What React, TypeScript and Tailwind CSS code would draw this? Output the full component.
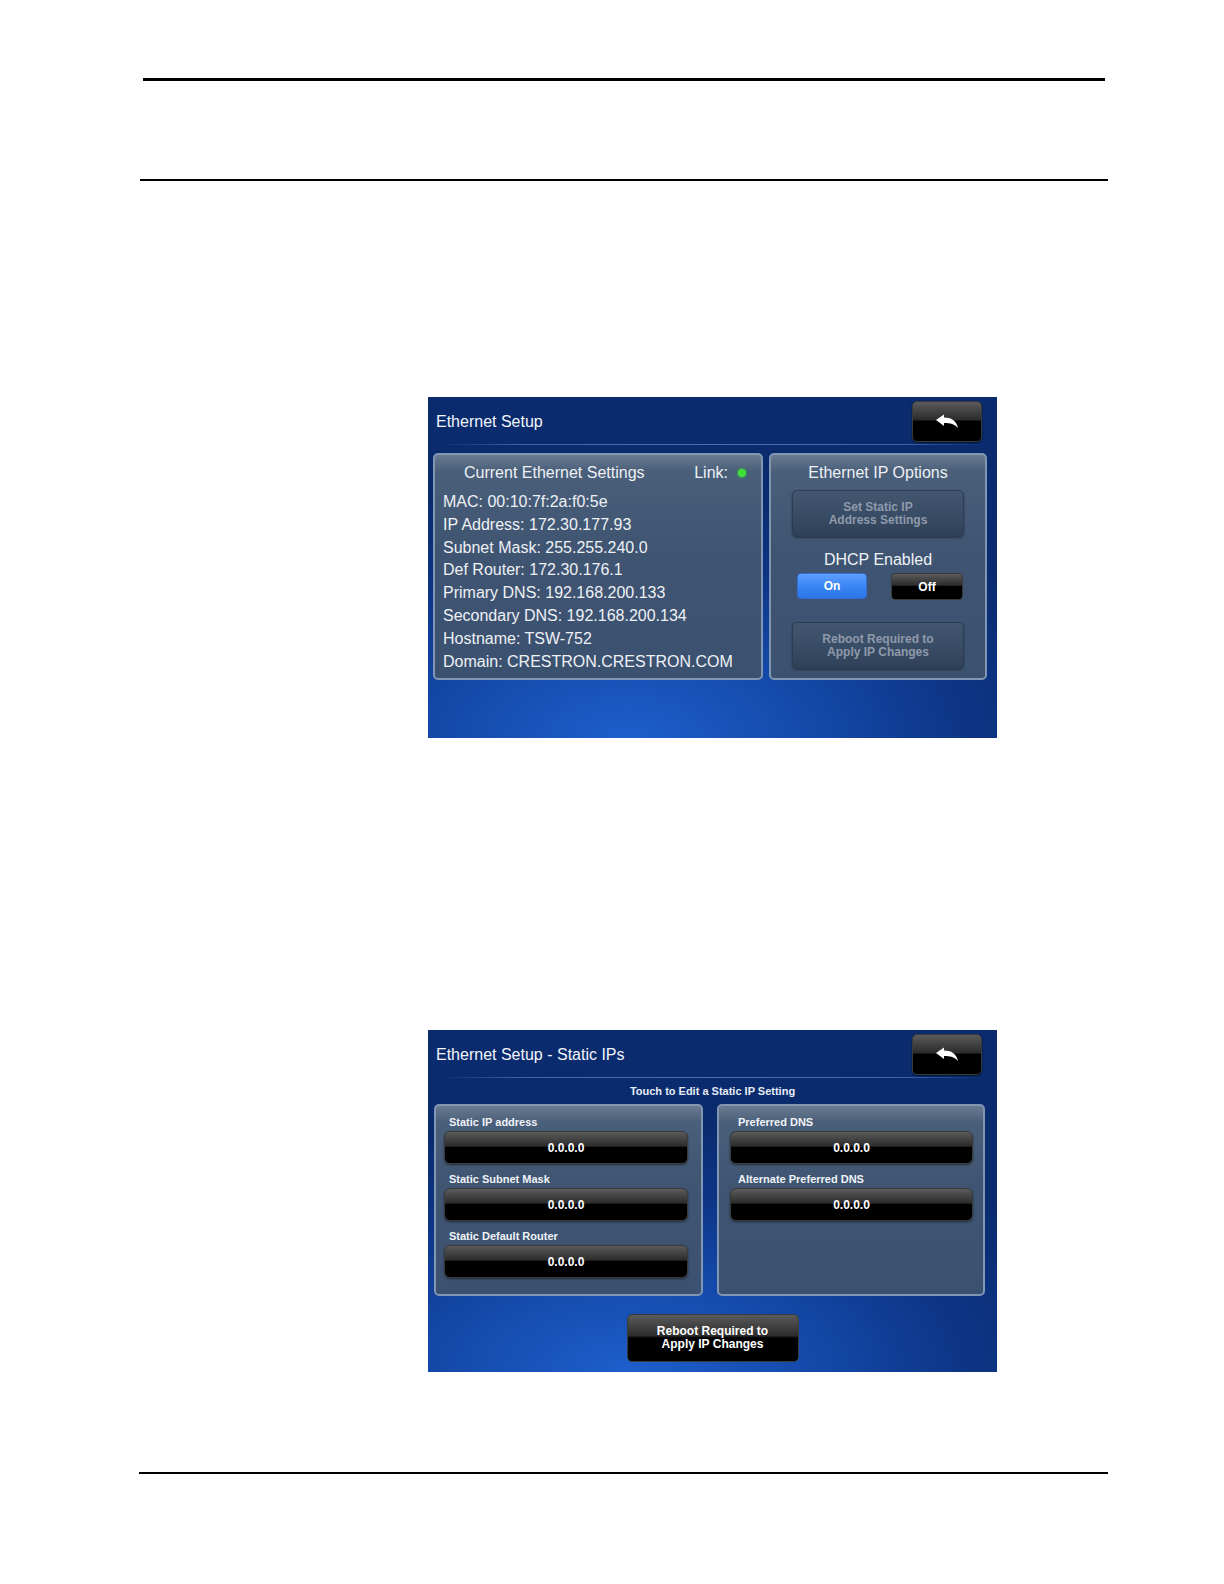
const screenBg =
  'bg-[radial-gradient(ellipse_85%_75%_at_35%_100%,#1d5fcc_0%,#1448a8_40%,#0d3585_70%,#0a2b6e_100%)]';
const panelBg =
  'bg-[linear-gradient(to_bottom,#6a7b91_0px,#4a5f7a_16px,#3f5572_40%,#3b5170_100%)]';
const blackBtn =
  'bg-[linear-gradient(to_bottom,#5b5b5b_0%,#2c2c2c_45%,#000_50%,#000_100%)] border border-[#3a3a3a]';

function BackButton() {
  return (
    <button className={`w-[70px] h-[41px] rounded-[5px] ${blackBtn} shadow-[0_1px_2px_rgba(0,0,0,0.6)] flex items-center justify-center`}>
      <svg width="24" height="15" viewBox="0 0 24 15">
        <path
          d="M1 6 L9 0.5 L9 3.5 C16 3.5 21.5 6.5 23 14 C19.5 10 15.5 9 9 9 L9 12 Z"
          fill="#ffffff"
        />
      </svg>
    </button>
  );
}

function Header({ title }: { title: string }) {
  return (
    <>
      <div className="flex items-center justify-between h-[47px] pl-[8px] pr-[15px] pt-[2px]">
        <span className="text-[16px] text-[#f2f5fa]">{title}</span>
        <BackButton />
      </div>
      <div className="h-px mx-[10px] bg-[linear-gradient(to_right,transparent,#3d64b0_15%,#4a70bb_50%,#3d64b0_85%,transparent)]" />
    </>
  );
}

function GrayButton({ lines }: { lines: string[] }) {
  return (
    <div className="mx-[21px] h-[47px] rounded-[5px] border border-[#2c3c52] bg-[linear-gradient(to_bottom,#435670_0%,#3a4d66_50%,#2f4158_100%)] shadow-[0_1px_2px_rgba(0,0,0,0.4)] flex flex-col items-center justify-center text-[12px] leading-[13px] font-bold text-[#8e9aab]">
      {lines.map((l) => (
        <span key={l}>{l}</span>
      ))}
    </div>
  );
}

function EthernetSetup() {
  const info = [
    'MAC: 00:10:7f:2a:f0:5e',
    'IP Address: 172.30.177.93',
    'Subnet Mask: 255.255.240.0',
    'Def Router: 172.30.176.1',
    'Primary DNS: 192.168.200.133',
    'Secondary DNS: 192.168.200.134',
    'Hostname: TSW-752',
    'Domain: CRESTRON.CRESTRON.COM',
  ];
  return (
    <div className={`w-[569px] h-[341px] ${screenBg} flex flex-col`}>
      <Header title="Ethernet Setup" />
      <div className="flex gap-[6px] pl-[5px] pr-[10px] mt-[8px]">
        <div className={`w-[330px] h-[227px] rounded-[5px] border-2 border-[#8196b3] ${panelBg}`}>
          <div className="flex items-center pt-[8px] pl-[29px] pr-[15px] text-[16px] leading-[20px] text-[#eef1f5]">
            <span>Current Ethernet Settings</span>
            <span className="ml-auto">Link:</span>
            <span className="ml-[10px] w-[8px] h-[8px] rounded-full bg-[#3ee03a] shadow-[0_0_3px_#2fd02f]" />
          </div>
          <div className="mt-[8px] pl-[8px] flex flex-col text-[16px] leading-[22.8px] text-[#eef1f5]">
            {info.map((l) => (
              <span key={l}>{l}</span>
            ))}
          </div>
        </div>
        <div className={`flex-1 h-[227px] rounded-[5px] border-2 border-[#8196b3] ${panelBg} flex flex-col`}>
          <div className="pt-[8px] text-center text-[16px] leading-[20px] text-[#eef1f5]">
            Ethernet IP Options
          </div>
          <div className="mt-[7px]">
            <GrayButton lines={['Set Static IP', 'Address Settings']} />
          </div>
          <div className="mt-[13px] text-center text-[16px] leading-[20px] text-[#eef1f5]">
            DHCP Enabled
          </div>
          <div className="mt-[3px] flex pl-[26px] gap-[24px]">
            <div className="w-[70px] h-[26px] rounded-[4px] border border-[#2f6fd4] bg-[linear-gradient(to_bottom,#5fa0ff_0%,#3a86f5_50%,#2a74e8_100%)] flex items-center justify-center text-[12px] font-bold text-white">
              On
            </div>
            <div className={`w-[72px] h-[27px] rounded-[4px] ${blackBtn} flex items-center justify-center text-[12px] font-bold text-white`}>
              Off
            </div>
          </div>
          <div className="mt-[22px]">
            <GrayButton lines={['Reboot Required to', 'Apply IP Changes']} />
          </div>
        </div>
      </div>
    </div>
  );
}

function Field({ label, first, labelPad }: { label: string; first?: boolean; labelPad: string }) {
  return (
    <div className={first ? '' : 'mt-[8px]'}>
      <div className={`${labelPad} text-[11px] leading-[14px] font-bold text-[#f0f3f7]`}>{label}</div>
      <div className={`mt-[2px] h-[33px] rounded-[6px] ${blackBtn} shadow-[0_1px_2px_rgba(0,0,0,0.5)] flex items-center justify-center text-[12px] font-bold text-white`}>
        0.0.0.0
      </div>
    </div>
  );
}

function StaticIPs() {
  return (
    <div className={`w-[569px] h-[342px] ${screenBg} flex flex-col`}>
      <Header title="Ethernet Setup - Static IPs" />
      <div className="mt-[6px] text-center text-[11px] leading-[14px] font-bold text-[#e6ecf4]">
        Touch to Edit a Static IP Setting
      </div>
      <div className="flex gap-[14px] pl-[6px] pr-[12px] mt-[6px]">
        <div className={`w-[269px] h-[192px] rounded-[5px] border-2 border-[#8196b3] ${panelBg} pl-[8px] pr-[13px] pt-[9px]`}>
          <Field label="Static IP address" first labelPad="pl-[5px]" />
          <Field label="Static Subnet Mask" labelPad="pl-[5px]" />
          <div className="mt-[6px]">
            <Field label="Static Default Router" labelPad="pl-[5px]" />
          </div>
        </div>
        <div className={`flex-1 h-[192px] rounded-[5px] border-2 border-[#8196b3] ${panelBg} pl-[11px] pr-[10px] pt-[9px]`}>
          <Field label="Preferred DNS" first labelPad="pl-[8px]" />
          <Field label="Alternate Preferred DNS" labelPad="pl-[8px]" />
        </div>
      </div>
      <div className="mt-[18px] flex justify-center">
        <div className={`w-[172px] h-[48px] rounded-[5px] ${blackBtn} flex flex-col items-center justify-center text-[12px] leading-[13px] font-bold text-white`}>
          <span>Reboot Required to</span>
          <span>Apply IP Changes</span>
        </div>
      </div>
    </div>
  );
}

export default function App() {
  return (
    <div className="bg-white pt-[78px] pb-[60px] font-['Liberation_Sans',Arial,sans-serif]">
      <div className="ml-[143px] w-[962px] h-[3px] bg-black" />
      <div className="mt-[98px] ml-[140px] w-[968px] h-[2px] bg-black" />
      <div className="mt-[216px] ml-[428px] w-[569px]">
        <EthernetSetup />
      </div>
      <div className="mt-[292px] ml-[428px] w-[569px]">
        <StaticIPs />
      </div>
      <div className="mt-[100px] ml-[139px] w-[969px] h-[2px] bg-black" />
    </div>
  );
}
